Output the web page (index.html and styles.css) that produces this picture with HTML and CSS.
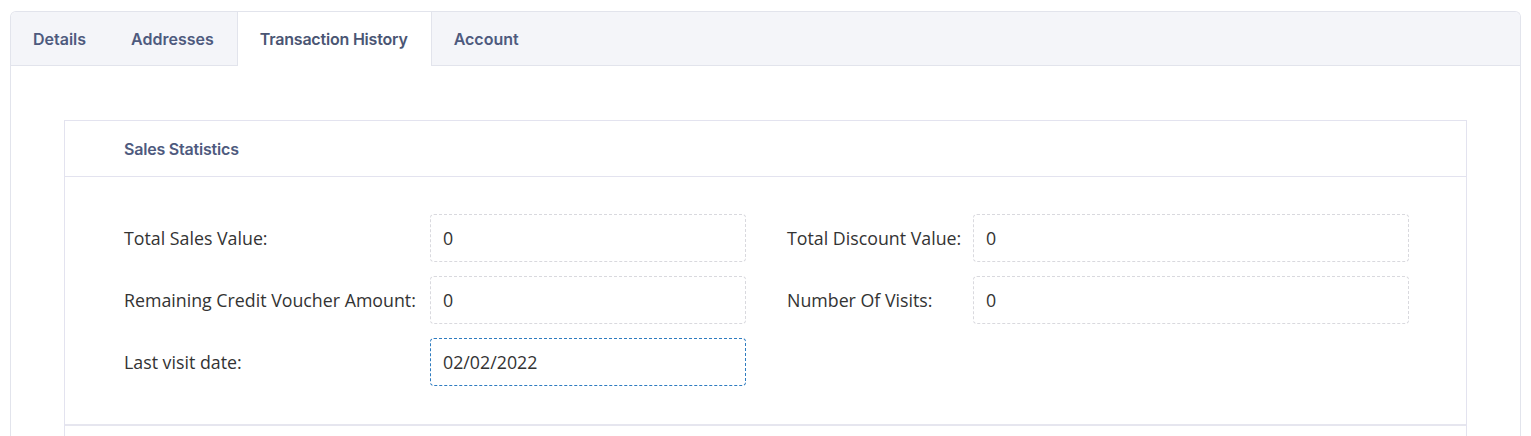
FILE: index.html
```html
<!DOCTYPE html>
<html>
<head>
<meta charset="utf-8">
<link rel="stylesheet" href="styles.css">
</head>
<body>
<div class="card">
  <div class="tabs">
    <div class="tab">Details</div>
    <div class="tab">Addresses</div>
    <div class="tab active">Transaction History</div>
    <div class="tab">Account</div>
  </div>
  <div class="tab-body">
    <div class="panel">
      <div class="panel-head">Sales Statistics</div>
      <div class="panel-body">
        <div class="col col-left">
          <label class="lbl">Total Sales Value:</label>
          <div class="field">0</div>
          <label class="lbl">Remaining Credit Voucher Amount:</label>
          <div class="field">0</div>
          <label class="lbl">Last visit date:</label>
          <div class="field focus">02/02/2022</div>
        </div>
        <div class="col col-right">
          <label class="lbl">Total Discount Value:</label>
          <div class="field">0</div>
          <label class="lbl">Number Of Visits:</label>
          <div class="field">0</div>
        </div>
      </div>
      <div class="panel-foot"></div>
    </div>
  </div>
</div>
</body>
</html>
```

FILE: styles.css
```css
* { box-sizing: border-box; }
html, body { margin: 0; padding: 0; background: #fff; }
body { padding: 11px 10px 0 10px; font-family: "Open Sans", "Noto Sans", sans-serif; }

.card {
  border: 1px solid #e2e4ec;
  border-bottom: none;
  border-radius: 6px 6px 0 0;
  height: 430px;
  overflow: hidden;
}

.tabs {
  display: flex;
  height: 54px;
  background: #f4f5f9;
  border-bottom: 1px solid #e2e4ec;
}
.tab {
  display: flex;
  align-items: center;
  padding: 0 23px 0 22px;
  font-family: "Inter", "Lato", sans-serif;
  font-weight: 600;
  font-size: 16px;
  letter-spacing: 0;
  color: #4e5a7e;
}
.tab.active {
  background: #fff;
  border-left: 1px solid #e2e4ec;
  border-right: 1px solid #e2e4ec;
  margin-bottom: -1px;
  padding: 0 23px 0 22px;
  letter-spacing: -0.2px;
  color: #4a5573;
}

.tab-body {
  padding: 54px 53px 0 53px;
}

.panel {
  border: 1px solid #e3e3ef;
  border-bottom: none;
}
.panel-head {
  height: 56px;
  display: flex;
  align-items: center;
  padding-left: 59px;
  font-family: "Inter", "Lato", sans-serif;
  font-weight: 600;
  font-size: 16px;
  letter-spacing: -0.2px;
  color: #4e5a7e;
  border-bottom: 1px solid #e3e3ef;
}
.panel-body {
  display: flex;
  gap: 41px;
  padding: 37px 58px 38px 59px;
}
.col {
  display: grid;
  row-gap: 14px;
  column-gap: 13px;
  grid-auto-rows: 48px;
  align-items: center;
  align-content: start;
}
.col-left { grid-template-columns: 293px 316px; }
.col-right { grid-template-columns: 173px 436px; }

.lbl {
  font-size: 17.8px;
  letter-spacing: 0;
  color: #333;
  white-space: nowrap;
}
.field {
  height: 48px;
  border: 1px dashed #d9d9de;
  border-radius: 4px;
  padding-left: 12px;
  display: flex;
  align-items: center;
  font-size: 17.8px;
  color: #333;
}
.field.focus {
  border-color: #2f7cc0;
}

.panel-foot {
  height: 40px;
  border-top: 2px solid #e6e6ef;
}
```
